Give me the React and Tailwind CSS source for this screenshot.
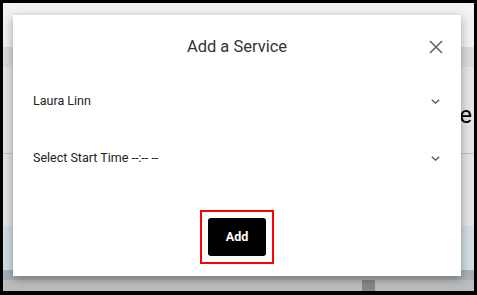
import React from 'react';

function Chevron() {
  return (
    <svg width="9" height="5" viewBox="0 0 9 5" className="text-[#3d5166] mr-[1px]">
      <path d="M0.8 0.8l3.7 3.4 3.7-3.4" fill="none" stroke="currentColor" strokeWidth="1.2" />
    </svg>
  );
}

function SelectRow({ label }) {
  return (
    <div className="flex items-center justify-between pl-[20px] pr-[20px] h-[20px]">
      <span className="text-[12.5px] text-[#222]">{label}</span>
      <Chevron />
    </div>
  );
}

export default function App() {
  return (
    <div className="w-[477px] h-[295px] bg-black p-[3px] pb-[4px] pr-[3px]" style={{ fontFamily: 'Roboto, "Liberation Sans", sans-serif' }}>
      <div className="relative w-full h-full bg-[#ececec] overflow-hidden">
        {/* page behind the dialog */}
        <div className="h-[44px] bg-[#f3f3f3]" />
        <div className="h-[20px] bg-[#dcdcdc]" />
        <div className="h-[86px] bg-[#e6e6e6] flex justify-end">
          <span className="text-[24px] leading-none text-black mt-[36px] mr-[2px]">e</span>
        </div>
        <div className="h-px bg-[#c4c4c4]" />
        <div className="h-[72px] bg-[#e4e4e4]" />
        <div className="h-[54px] bg-[#d2dde4] flex items-end">
          <div className="h-[10px] w-full bg-[#a9b1b7]" />
        </div>
        <div className="h-[11px] bg-[#bdbdbd] flex">
          <div className="w-[359px]" />
          <div className="w-[13px] bg-[#888]" />
        </div>

        {/* dialog */}
        <div className="absolute left-[10px] top-[12px] w-[448px] h-[261px] bg-white shadow-[0_3px_10px_rgba(0,0,0,0.35)] flex flex-col">
          <div className="relative h-[64px] flex items-center justify-center">
            <h2 className="text-[16.5px] text-[#333]">Add a Service</h2>
            <button className="absolute right-[18px] top-[25px] text-[#666]">
              <svg width="14" height="14" viewBox="0 0 14 14">
                <path d="M1 1l12 12M13 1L1 13" stroke="currentColor" strokeWidth="1.6" />
              </svg>
            </button>
          </div>
          <div className="h-[12px]" />
          <SelectRow label="Laura Linn" />
          <div className="h-[37px]" />
          <SelectRow label="Select Start Time --:-- --" />
          <div className="flex-1 flex items-start justify-center pt-[42px]">
            <div className="border-2 border-[#ff0000] p-[6px]">
              <button className="w-[58px] h-[38px] bg-black rounded-[3px] text-white font-bold text-[12.5px]">
                Add
              </button>
            </div>
          </div>
        </div>
      </div>
    </div>
  );
}
